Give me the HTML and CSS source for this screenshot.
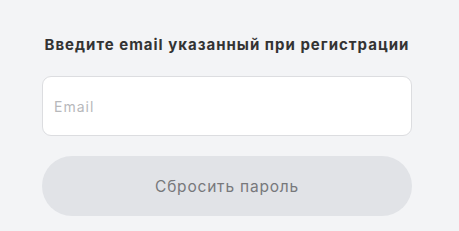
FILE: index.html
```html
<!DOCTYPE html>
<html>
<head>
  <meta charset="utf-8">
  <title>Сброс пароля</title>
  <link rel="stylesheet" href="styles.css">
</head>
<body>
  <div class="container">
    <p class="title">Введите email указанный при регистрации</p>
    <input class="field" type="email" placeholder="Email">
    <button class="btn" disabled>Сбросить пароль</button>
  </div>
</body>
</html>
```
FILE: styles.css
```css
html, body, p {
  margin: 0;
  padding: 0;
  box-sizing: border-box;
}

body {
  background-color: #f3f4f6;
  color: #333;
  font-family: Inter, 'Noto Sans', sans-serif;
}

.container {
  width: 370px;
  margin-left: 42px;
  padding-top: 36px;
  display: flex;
  flex-direction: column;
}

.title {
  font-size: 15px;
  font-weight: 700;
  line-height: 18px;
  letter-spacing: 1px;
  text-align: center;
  color: #333;
  margin-bottom: 22px;
}

.field {
  box-sizing: border-box;
  height: 60px;
  width: 100%;
  border: 1px solid #dcdde0;
  border-radius: 9px;
  background: #fff;
  padding: 0 11px;
  font-family: inherit;
  font-size: 14px;
  letter-spacing: 1px;
  outline: none;
}

.field::placeholder {
  color: #b7b8bb;
}

.btn {
  margin-top: 20px;
  height: 60px;
  width: 100%;
  border: none;
  border-radius: 30px;
  background-color: #e1e3e7;
  color: #77787b;
  font-family: inherit;
  font-size: 15.5px;
  letter-spacing: 0.8px;
}
```
